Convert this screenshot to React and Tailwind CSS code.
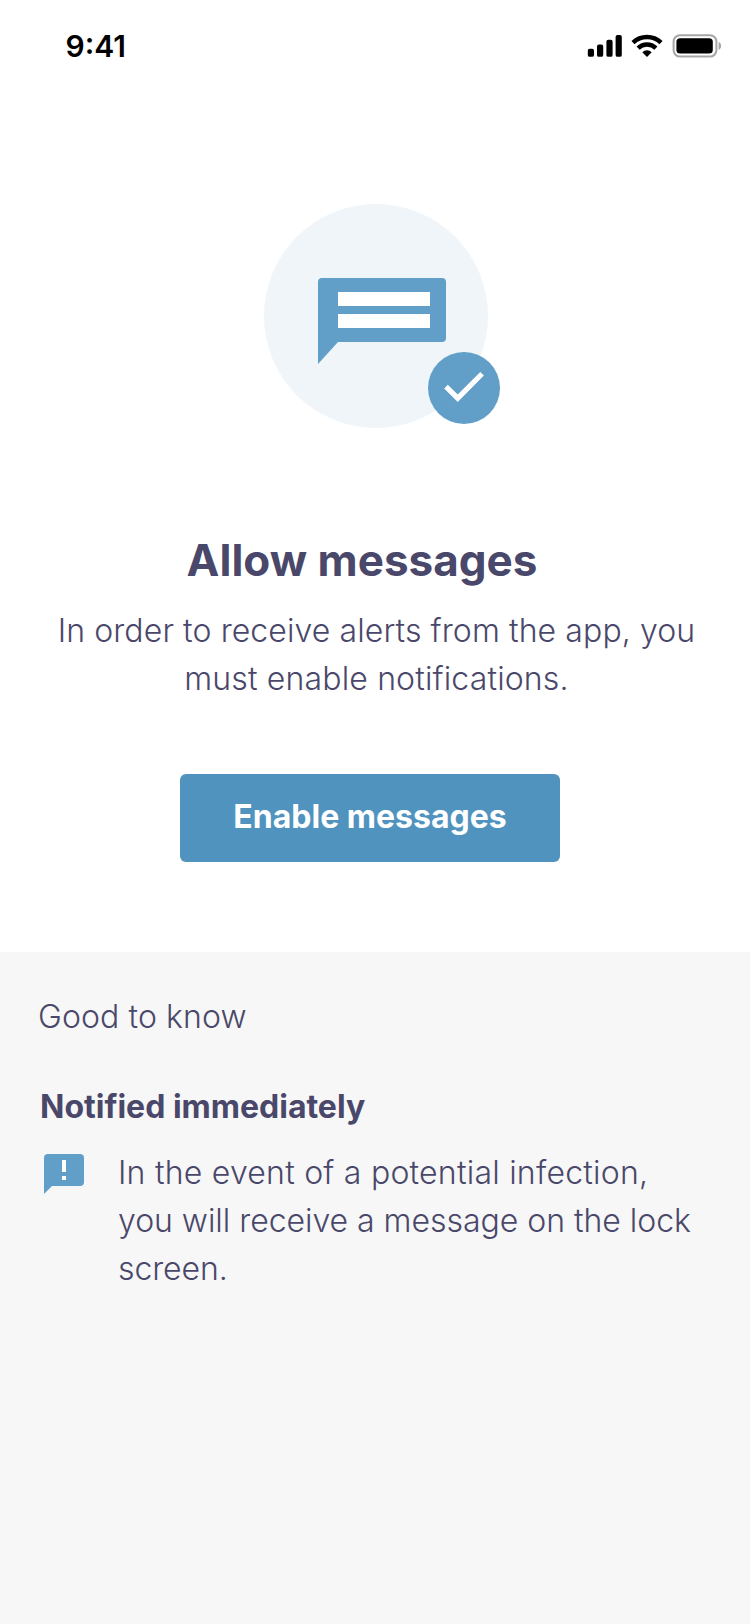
function StatusBar() {
  return (
    <header className="flex h-[96px] items-start justify-between pl-[65.5px] pr-[29px] text-black">
      <span className="mt-[28px] text-[30px] font-semibold leading-[36px]">9:41</span>
      <div className="mt-[34px] flex items-start">
        <svg className="h-[24px] w-[35px]" viewBox="0 0 35 24" fill="currentColor" aria-hidden="true">
          <rect x="0.8" y="14.8" width="6.2" height="8" rx="1.9" />
          <rect x="10" y="10.6" width="6.2" height="12.2" rx="1.9" />
          <rect x="19.4" y="5.8" width="6.2" height="17" rx="1.9" />
          <rect x="28.6" y="1" width="6.2" height="21.8" rx="1.9" />
        </svg>
        <svg className="ml-[9px] h-[24px] w-[32px]" viewBox="0 0 32 24" fill="none" stroke="currentColor" aria-hidden="true">
          <path d="M2 8.600A20 20 0 0 1 30 8.600" strokeWidth="4.5" />
          <path d="M7.100 14.100A12.800 12.800 0 0 1 24.900 14.100" strokeWidth="4.500" />
          <path d="M16 23L11.300 18.200A6.900 6.900 0 0 1 20.700 18.200Z" fill="currentColor" stroke="none" />
        </svg>
        <svg className="ml-[8.500px] h-[24px] w-[49.500px]" viewBox="0 0 49.5 24" fill="none" aria-hidden="true">
          <rect x="1.600" y="1.200" width="42.800" height="21.400" rx="6.400" stroke="#a6a6a6" strokeWidth="2" />
          <rect x="4.400" y="4.200" width="36.400" height="15.400" rx="3.600" fill="currentColor" />
          <path d="M46.600 8V16C48.200 15.300 49.200 13.800 49.200 12S48.200 8.700 46.600 8Z" fill="#a6a6a6" />
        </svg>
      </div>
    </header>
  );
}

function MessagesIllustration() {
  return (
    <svg className="ml-[264px] mt-[108px] h-[224px] w-[236px]" viewBox="264 204 236 224" aria-hidden="true">
      <circle cx="376" cy="316" r="112" fill="#eff5f9" />
      <path d="M322 278H442A4 4 0 0 1 446 282V338A4 4 0 0 1 442 342H338L318 364V282A4 4 0 0 1 322 278Z" fill="#619fc8" />
      <path d="M338 292H430V306H338ZM338 314H430V328H338Z" fill="#fff" />
      <circle cx="464" cy="388" r="36" fill="#619fc8" />
      <path d="M444.200 388.400L447.800 384.800L457.700 394.600L480.300 372L483.900 375.600L457.700 402Z" fill="#fff" />
    </svg>
  );
}

function AlertIcon() {
  return (
    <svg className="mt-[5px] h-[40px] w-[40px] shrink-0" viewBox="0 0 40 40" aria-hidden="true">
      <path d="M4 0H36A4 4 0 0 1 40 4V28A4 4 0 0 1 36 32H8L0 40V4A4 4 0 0 1 4 0Z" fill="#619fc8" />
      <path d="M18 6H22V18H18ZM18 22H22V26H18Z" fill="#fff" />
    </svg>
  );
}

export default function App() {
  return (
    <div className="flex min-h-[1624px] w-[750px] flex-col bg-white font-[Inter,sans-serif] text-[32px] text-[#4a486a]">
      <StatusBar />
      <main className="flex grow flex-col">
        <MessagesIllustration />
        <h1 className="mt-[105px] pr-[26px] text-center text-[44px] font-bold leading-[54px]">
          Allow messages
        </h1>
        <p className="mt-[20px] pl-[3px] text-center font-light leading-[48px]">
          <span className="block tracking-[0.1px]">In order to receive alerts from the app, you</span>
          <span className="block tracking-[0.15px]">must enable notifications.</span>
        </p>
        <button className="ml-[180px] mt-[71px] flex h-[88px] w-[380px] items-start justify-center rounded-[6px] bg-[#5093bf] pt-[23px] font-bold leading-[39px] text-white">
          Enable messages
        </button>
        <section className="mt-[90px] grow bg-[#f7f7f7] pt-[45px]">
          <h2 className="pl-[38px] font-light leading-[39px] tracking-[0.1px]">Good to know</h2>
          <h3 className="mt-[51px] pl-[40px] font-bold leading-[39px]">Notified immediately</h3>
          <div className="mt-[23px] flex items-start pl-[44px]">
            <AlertIcon />
            <p className="ml-[34px] font-light leading-[48px]">
              <span className="block tracking-[0.23px]">In the event of a potential infection,</span>
              <span className="block tracking-[-0.03px]">you will receive a message on the lock</span>
              <span className="block tracking-[-0.1px]">screen.</span>
            </p>
          </div>
        </section>
      </main>
    </div>
  );
}
